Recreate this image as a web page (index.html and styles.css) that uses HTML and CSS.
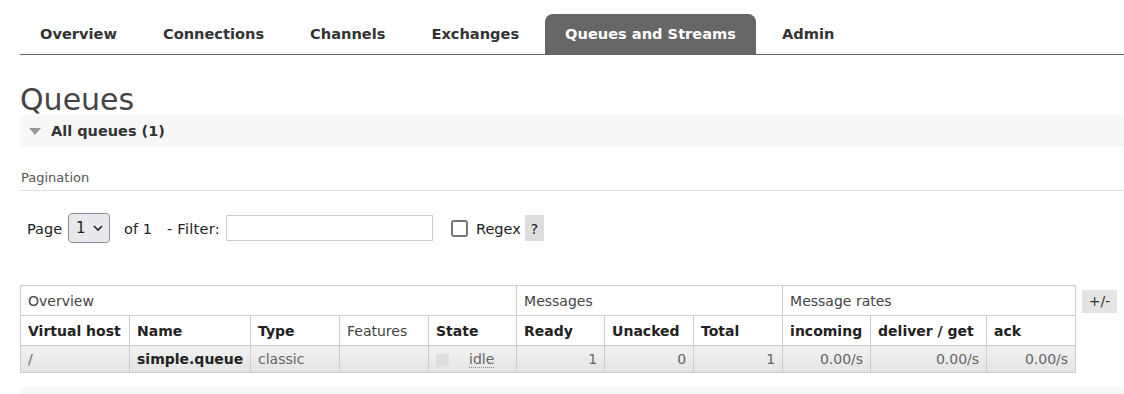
FILE: index.html
```html
<!DOCTYPE html>
<html lang="en">
<head>
    <meta charset="UTF-8">
    <title>RabbitMQ Management</title>
    <link rel="stylesheet" href="styles.css">
</head>
<body>
<div id="outer">
    <div id="menu">
        <ul>
            <li><a href="#">Overview</a></li>
            <li><a href="#">Connections</a></li>
            <li><a href="#">Channels</a></li>
            <li><a href="#">Exchanges</a></li>
            <li><a href="#" class="selected">Queues and Streams</a></li>
            <li><a href="#">Admin</a></li>
        </ul>
    </div>

    <div id="main">
        <h1>Queues</h1>
        <div class="section">
            <h2><span class="tri"></span>All queues (1)</h2>
            <div class="hider">
                <h3>Pagination</h3>
                <div class="filter">
                    <label for="page">Page</label>
                    <span class="select-wrap">
                        <select id="page">
                            <option value="1">1</option>
                        </select>
                        <svg class="chevron" width="12" height="8" viewBox="0 0 12 8">
                            <path d="M2 2 L6 6 L10 2" fill="none" stroke="#222" stroke-width="1.6"/>
                        </svg>
                    </span>
                    <span class="of">of 1</span>
                    <label for="filter" class="filter-label">- Filter:</label>
                    <input type="text" id="filter">
                    <input type="checkbox" id="regex" class="check">
                    <label for="regex" class="regex-label">Regex</label>
                    <span class="help">?</span>
                </div>

                <div class="list-wrap">
                    <table class="list">
                        <colgroup>
                            <col style="width: 109px">
                            <col style="width: 121px">
                            <col style="width: 89px">
                            <col style="width: 89px">
                            <col style="width: 88px">
                            <col style="width: 88px">
                            <col style="width: 89px">
                            <col style="width: 89px">
                            <col style="width: 88px">
                            <col style="width: 116px">
                            <col style="width: 89px">
                        </colgroup>
                        <thead>
                        <tr class="group">
                            <th colspan="5">Overview</th>
                            <th colspan="3">Messages</th>
                            <th colspan="3">Message rates</th>
                        </tr>
                        <tr>
                            <th>Virtual host</th>
                            <th>Name</th>
                            <th>Type</th>
                            <th class="plain">Features</th>
                            <th>State</th>
                            <th>Ready</th>
                            <th>Unacked</th>
                            <th>Total</th>
                            <th>incoming</th>
                            <th>deliver / get</th>
                            <th>ack</th>
                        </tr>
                        </thead>
                        <tbody>
                        <tr>
                            <td>/</td>
                            <td class="name">simple.queue</td>
                            <td>classic</td>
                            <td></td>
                            <td><span class="state"><span class="status"></span><abbr title="idle">idle</abbr></span></td>
                            <td class="r">1</td>
                            <td class="r">0</td>
                            <td class="r">1</td>
                            <td class="r">0.00/s</td>
                            <td class="r">0.00/s</td>
                            <td class="r">0.00/s</td>
                        </tr>
                        </tbody>
                    </table>
                    <span class="toggle">+/-</span>
                </div>
            </div>
        </div>
        <div class="section next"></div>
    </div>
</div>
</body>
</html>
```

FILE: styles.css
```css
body {
    margin: 0;
    font-family: "DejaVu Sans", Verdana, sans-serif;
    font-size: 14px;
    color: #484848;
    background: #fff;
}

#outer {
    margin-left: 20px;
}

#menu {
    padding-top: 14px;
}

#menu ul {
    display: flex;
    gap: 6px;
    margin: 0;
    padding: 0;
    list-style: none;
    border-bottom: 1px solid #666;
}

#menu ul li a {
    display: block;
    padding: 0 20px;
    line-height: 40px;
    font-size: 14.6px;
    font-weight: bold;
    color: #333;
    text-decoration: none;
    border-radius: 8px 8px 0 0;
}

#menu ul li a.selected {
    background: #666;
    color: #fff;
}

h1 {
    margin: 0;
    padding-top: 30px;
    font-size: 30px;
    line-height: 30px;
    font-weight: normal;
    color: #444;
}

.section h2 {
    display: flex;
    align-items: center;
    margin: 0;
    height: 32px;
    background: #f8f8f8;
    font-size: 14.5px;
    color: #333;
}

.tri {
    width: 0;
    height: 0;
    margin: 1px 10px 0 9px;
    border-left: 6.5px solid transparent;
    border-right: 6.5px solid transparent;
    border-top: 7px solid #999;
}

h3 {
    margin: 23px 0 0;
    padding: 0 0 4px 1px;
    font-size: 13px;
    line-height: 16px;
    font-weight: normal;
    color: #555;
    border-bottom: 1px solid #e2e2e2;
}

.filter {
    display: flex;
    align-items: center;
    height: 30px;
    margin-top: 22px;
    padding-left: 7px;
    font-size: 14.5px;
    line-height: 19px;
    color: #222;
}

.filter label,
.filter .of {
    padding-top: 2px;
}

.select-wrap {
    position: relative;
    margin-left: 6px;
}

.select-wrap select {
    appearance: none;
    display: block;
    width: 42px;
    height: 30px;
    padding: 0 0 0 7px;
    font-family: inherit;
    font-size: 15px;
    color: #222;
    background: #e9e9ed;
    border: 1px solid #8f8f9d;
    border-radius: 4px;
}

.chevron {
    position: absolute;
    right: 6px;
    top: 11px;
    pointer-events: none;
}

.of {
    margin-left: 14px;
}

.filter-label {
    margin-left: 15px;
    letter-spacing: 0.3px;
}

#filter {
    width: 207px;
    height: 26px;
    margin-left: 6px;
    box-sizing: border-box;
    border: 1px solid #ccc;
    font-family: inherit;
}

.check {
    appearance: none;
    width: 17px;
    height: 17px;
    margin: 0 0 0 18px;
    border: 2px solid #767676;
    border-radius: 3px;
    box-sizing: border-box;
}

.regex-label {
    margin-left: 8px;
}

.help {
    display: inline-block;
    width: 19px;
    height: 26px;
    margin-left: 4px;
    line-height: 28px;
    text-align: center;
    background: #ddd;
}

.list-wrap {
    display: flex;
    align-items: flex-start;
    gap: 6px;
    margin-top: 42px;
}

.list {
    width: 1055px;
    table-layout: fixed;
    border-collapse: collapse;
}

.list th,
.list td {
    border: 1px solid #ccc;
    padding: 6px 7px 5px;
    line-height: 18px;
    text-align: left;
    white-space: nowrap;
    overflow: hidden;
}

.list th {
    color: #222;
}

.list tr.group th,
.list th.plain {
    font-weight: normal;
    color: #444;
}

.list tbody td {
    padding: 5px 7px 4px;
    line-height: 17px;
    color: #666;
    background: linear-gradient(#f2f2f2, #e3e3e3);
}

.list tbody td.name {
    font-weight: bold;
    color: #222;
}

.list tbody td.r {
    text-align: right;
}

.state {
    display: flex;
    align-items: center;
    gap: 20px;
}

.status {
    width: 13px;
    height: 12px;
    background: #ddd;
}

abbr {
    text-decoration: none;
    border-bottom: 1px dotted #888;
    line-height: 16px;
}

.toggle {
    display: inline-block;
    margin-top: 5px;
    width: 35px;
    height: 23px;
    line-height: 23px;
    text-align: center;
    background: #e4e4e4;
    color: #333;
}

.section.next {
    height: 8px;
    margin-top: 14px;
    background: #f8f8f8;
}
```
